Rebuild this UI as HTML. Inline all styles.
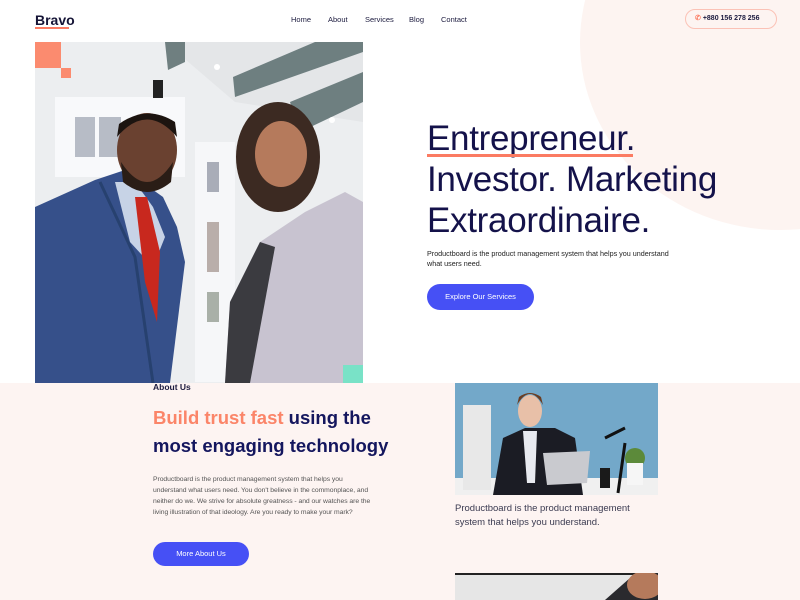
<!DOCTYPE html>
<html><head><meta charset="utf-8"><style>
*{margin:0;padding:0;box-sizing:border-box}
body{width:800px;height:600px;overflow:hidden;position:relative;background:#fff;font-family:"Liberation Sans",Arial,sans-serif;color:#14124a}
.abs{position:absolute}
.nav a{position:absolute;top:15px;font-size:7.5px;color:#1b1a3e}
</style></head><body>
<div class="abs" style="left:580px;top:-145px;width:400px;height:375px;border-radius:50%;background:#fdf4f1"></div>
<div class="abs" style="left:0;top:383px;width:800px;height:217px;background:#fdf4f2"></div>

<div class="abs" style="left:35px;top:12px;font-size:14px;font-weight:bold;color:#151436">Bravo</div>
<div class="abs" style="left:35px;top:27px;width:34px;height:2px;background:#fb7b62"></div>
<div class="nav">
<a style="left:291px">Home</a><a style="left:328px">About</a><a style="left:365px">Services</a><a style="left:409px">Blog</a><a style="left:441px">Contact</a>
</div>
<div class="abs" style="left:685px;top:9px;width:92px;height:20px;border:1.5px solid #fbc2b6;border-radius:10px;font-size:7px;font-weight:bold;color:#1b1a3e;line-height:17px;padding-left:9px"><span style="color:#fb7b62">✆</span> +880 156 278 256</div>

<svg class="abs" style="left:35px;top:42px" width="328" height="341" viewBox="0 0 328 341">
<rect width="328" height="341" fill="#eceef0"/>
<polygon points="130,0 328,0 328,80 200,60" fill="#e4e6e8"/>
<polygon points="130,0 150,0 150,20 133,28" fill="#6f7f80"/>
<polygon points="198,35 280,0 328,0 328,10 200,55" fill="#6e7f80"/>
<polygon points="255,60 328,30 328,60 265,90" fill="#6e7f80"/>
<rect x="20" y="55" width="130" height="80" fill="#f8f9fb"/>
<rect x="40" y="75" width="20" height="40" fill="#b7bcc6"/><rect x="64" y="75" width="22" height="40" fill="#b7bcc6"/>
<rect x="160" y="100" width="40" height="240" fill="#f6f7f9"/>
<rect x="172" y="120" width="12" height="30" fill="#a9adb8"/><rect x="172" y="180" width="12" height="50" fill="#b9aeaa"/><rect x="172" y="250" width="12" height="30" fill="#a9b0a8"/>
<rect x="118" y="38" width="10" height="18" fill="#222"/>
<circle cx="182" cy="25" r="3" fill="#fff"/><circle cx="297" cy="78" r="3" fill="#fff"/>
<polygon points="0,165 60,138 90,128 128,155 142,185 150,220 135,341 0,341" fill="#36508a"/>
<polygon points="80,140 100,140 118,165 130,195 118,225 95,200" fill="#c7d3e6"/>
<polygon points="100,155 112,155 125,210 122,280 110,240" fill="#c8281e"/>
<path d="M65,140 L100,215 L118,341" stroke="#27416f" stroke-width="3" fill="none"/>
<ellipse cx="112" cy="108" rx="30" ry="37" fill="#6a4130"/>
<path d="M82,95 Q112,60 142,95 L140,80 Q112,62 84,82 Z" fill="#1c1410"/>
<path d="M86,120 Q112,160 138,120 L136,140 Q112,160 88,140Z" fill="#2a1d16"/>
<ellipse cx="243" cy="115" rx="42" ry="55" fill="#3c2a22"/>
<ellipse cx="246" cy="112" rx="26" ry="33" fill="#b57a5c"/>
<polygon points="190,341 195,260 225,200 270,170 310,150 328,160 328,341" fill="#c8c3d0"/>
<polygon points="195,260 225,200 240,205 215,341 190,341" fill="#3b3b40"/>
<rect x="308" y="323" width="20" height="18" fill="#79e2c7"/>
<rect x="0" y="0" width="26" height="26" fill="#fb8b6f"/>
<rect x="26" y="26" width="10" height="10" fill="#fb8b6f"/>
</svg>

<div class="abs" style="left:427px;top:118px;font-size:35px;line-height:41px;color:#14124a;letter-spacing:-0.3px">Entrepreneur.<br>Investor. Marketing<br>Extraordinaire.</div>
<div class="abs" style="left:427px;top:154px;width:206px;height:3px;background:#fb7b62"></div>
<div class="abs" style="left:427px;top:249px;font-size:7.2px;line-height:10px;color:#222">Productboard is the product management system that helps you understand<br>what users need.</div>
<div class="abs" style="left:427px;top:284px;width:107px;height:26px;border-radius:13px;background:#4650f5;color:#fff;font-size:7.5px;text-align:center;line-height:26px">Explore Our Services</div>

<div class="abs" style="left:153px;top:382px;font-size:8.5px;font-weight:bold;color:#1b1a3e">About Us</div>
<div class="abs" style="left:153px;top:404px;font-size:18.5px;font-weight:bold;line-height:28px;color:#14165e"><span style="color:#fb8569">Build trust fast</span> using the<br>most engaging technology</div>
<div class="abs" style="left:153px;top:474px;font-size:6.8px;line-height:11px;color:#555;letter-spacing:-0.05px">Productboard is the product management system that helps you<br>understand what users need. You don't believe in the commonplace, and<br>neither do we. We strive for absolute greatness - and our watches are the<br>living illustration of that ideology. Are you ready to make your mark?</div>
<div class="abs" style="left:153px;top:542px;width:96px;height:24px;border-radius:12px;background:#4650f5;color:#fff;font-size:7.5px;text-align:center;line-height:24px">More About Us</div>

<svg class="abs" style="left:455px;top:383px" width="203" height="112" viewBox="0 0 203 112">
<rect width="203" height="112" fill="#73a8c9"/>
<rect y="95" width="203" height="17" fill="#f0f0f0"/>
<rect x="8" y="22" width="28" height="85" fill="#e8e8e8"/>
<polygon points="38,112 48,55 70,45 100,45 120,55 128,112" fill="#1b1c24"/>
<polygon points="68,48 82,48 80,100 72,100" fill="#e8eaf0"/>
<ellipse cx="75" cy="28" rx="12" ry="16" fill="#e8c0a8"/>
<path d="M62,22 Q75,0 88,22 L86,14 Q75,6 64,14Z" fill="#6b3d22"/>
<polygon points="88,70 135,68 132,100 92,102" fill="#c9cacf"/>
<rect x="145" y="85" width="10" height="20" fill="#1a1a1a"/>
<path d="M163,110 L170,60 M150,55 L170,45" stroke="#111" stroke-width="3"/>
<circle cx="180" cy="75" r="10" fill="#5c8a3a"/><rect x="172" y="80" width="16" height="22" fill="#f6f6f6"/>
</svg>
<div class="abs" style="left:455px;top:502px;font-size:9.5px;line-height:14px;color:#3a3a50">Productboard is the product management<br>system that helps you understand.</div>
<svg class="abs" style="left:455px;top:573px" width="203" height="27" viewBox="0 0 203 27">
<rect width="203" height="27" fill="#e6e6e6"/>
<rect x="0" y="0" width="203" height="2" fill="#222"/>
<polygon points="150,27 175,5 203,0 203,27" fill="#2a2a2e"/>
<ellipse cx="190" cy="12" rx="18" ry="14" fill="#b57a5c"/>
</svg>
</body></html>
